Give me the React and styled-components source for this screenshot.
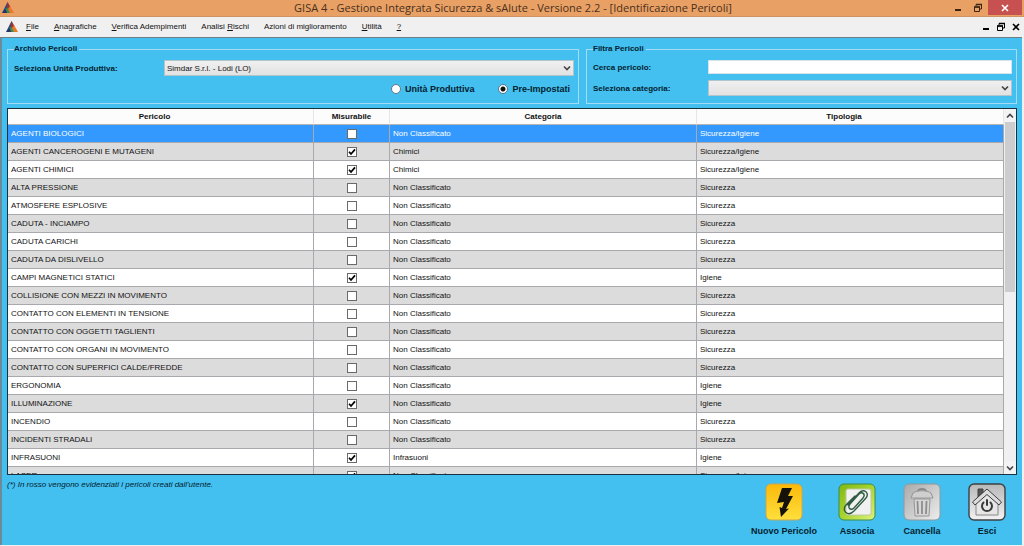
import React, { useState } from "react";
import styled, { createGlobalStyle } from "styled-components";

const MENU = [
  { key: "F", before: "", after: "ile" },
  { key: "A", before: "", after: "nagrafiche" },
  { key: "V", before: "", after: "erifica Adempimenti" },
  { key: "R", before: "Analisi ", after: "ischi" },
  { key: "", before: "Azioni di miglioramento", after: "" },
  { key: "U", before: "", after: "tilità" },
  { key: "?", before: "", after: "" },
];

const NC = "Non Classificato";
const PERICOLI = [
  ["AGENTI BIOLOGICI", false, NC, "Sicurezza/Igiene"],
  ["AGENTI CANCEROGENI E MUTAGENI", true, "Chimici", "Sicurezza/Igiene"],
  ["AGENTI CHIMICI", true, "Chimici", "Sicurezza/Igiene"],
  ["ALTA PRESSIONE", false, NC, "Sicurezza"],
  ["ATMOSFERE ESPLOSIVE", false, NC, "Sicurezza"],
  ["CADUTA - INCIAMPO", false, NC, "Sicurezza"],
  ["CADUTA CARICHI", false, NC, "Sicurezza"],
  ["CADUTA DA DISLIVELLO", false, NC, "Sicurezza"],
  ["CAMPI MAGNETICI STATICI", true, NC, "Igiene"],
  ["COLLISIONE CON MEZZI IN MOVIMENTO", false, NC, "Sicurezza"],
  ["CONTATTO CON ELEMENTI IN TENSIONE", false, NC, "Sicurezza"],
  ["CONTATTO CON OGGETTI TAGLIENTI", false, NC, "Sicurezza"],
  ["CONTATTO CON ORGANI IN MOVIMENTO", false, NC, "Sicurezza"],
  ["CONTATTO CON SUPERFICI CALDE/FREDDE", false, NC, "Sicurezza"],
  ["ERGONOMIA", false, NC, "Igiene"],
  ["ILLUMINAZIONE", true, NC, "Igiene"],
  ["INCENDIO", false, NC, "Sicurezza"],
  ["INCIDENTI STRADALI", false, NC, "Sicurezza"],
  ["INFRASUONI", true, "Infrasuoni", "Igiene"],
  ["LASER", true, NC, "Sicurezza/Igiene"],
];

const Logo = () => (
  <svg width="12" height="12" viewBox="0 0 12 12" aria-hidden="true">
    <path d="M5.5 0 L7 4 L5 8 L0 11 Z" fill="#1d4f86" />
    <path d="M5.5 0 L8.5 5 L7 8 L4.5 7 Z" fill="#a5302c" />
    <path d="M8 4 L12 11 L7.5 11 L6 7 Z" fill="#e8792c" />
    <path d="M3 7 L5.5 6 L8 11 L4 11 Z" fill="#3f8a4a" />
    <path d="M0 11 L3.5 7 L5 11 Z" fill="#27306b" />
  </svg>
);

const Chevron = ({ up }) => (
  <svg width="8" height="6" viewBox="0 0 8 6" aria-hidden="true">
    <path
      d={up ? "M1 4.5 L4 1.5 L7 4.5" : "M1 1.5 L4 4.5 L7 1.5"}
      fill="none"
      stroke="#444"
      strokeWidth="1.6"
    />
  </svg>
);

const MinimizeIcon = () => (
  <svg width="10" height="10" viewBox="0 0 10 10" aria-hidden="true">
    <path d="M2 7 H8" stroke="currentColor" strokeWidth="2" />
  </svg>
);

const RestoreIcon = () => (
  <svg width="10" height="10" viewBox="0 0 10 10" aria-hidden="true">
    <path d="M3 3 V1.5 H8.5 V6 H7" fill="none" stroke="currentColor" />
    <path d="M3 1.5 H9" stroke="currentColor" strokeWidth="1.5" />
    <path d="M1.5 4 H6.5 V8.5 H1.5 Z" fill="none" stroke="currentColor" />
    <path d="M1 4 H7" stroke="currentColor" strokeWidth="1.5" />
  </svg>
);

const CloseIcon = () => (
  <svg width="10" height="10" viewBox="0 0 10 10" aria-hidden="true">
    <path d="M2 2 L8 8 M8 2 L2 8" stroke="currentColor" strokeWidth="1.6" />
  </svg>
);

const BoltIcon = () => (
  <svg width="38" height="38" viewBox="0 0 38 38" aria-hidden="true">
    <defs>
      <linearGradient id="bolt" x1="0" y1="0" x2="0" y2="1">
        <stop offset="0" stopColor="#fbb90a" />
        <stop offset="1" stopColor="#ffdf3c" />
      </linearGradient>
    </defs>
    <rect x="1" y="1" width="36" height="36" rx="5" fill="url(#bolt)" stroke="#c9a550" />
    <path d="M17 5 L27 5 L23 13 L28 13 L21 26 L24 25.5 L16 34 L14.5 24 L17 25 L19 19 L12 20 Z" fill="#15120a" />
  </svg>
);

const ClipIcon = () => (
  <svg width="38" height="38" viewBox="0 0 38 38" aria-hidden="true">
    <defs>
      <linearGradient id="clip" x1="0" y1="0" x2="1" y2="1">
        <stop offset="0" stopColor="#7fb814" />
        <stop offset="0.5" stopColor="#a8d430" />
        <stop offset="1" stopColor="#e0f27c" />
      </linearGradient>
    </defs>
    <rect x="1" y="1" width="36" height="36" rx="5" fill="url(#clip)" stroke="#3c8a4c" />
    <rect x="8" y="6" width="25" height="26" rx="2" fill="#f1f1f1" stroke="#bcc8a0" />
    <path
      d="M10 22 L21 10 C26 5 32 10 28 15 L16 28 C10 34 3 28 8 22 L17 13 M16 25 L25 15 C28 11 24 8 21 11 L12 21 C9 25 13 28 16 25"
      fill="none"
      stroke="#2f5c40"
      strokeWidth="1.4"
      strokeLinecap="round"
    />
  </svg>
);

const TrashIcon = () => (
  <svg width="38" height="38" viewBox="0 0 38 38" aria-hidden="true">
    <defs>
      <linearGradient id="trash" x1="0" y1="0" x2="1" y2="1">
        <stop offset="0" stopColor="#a9a9a9" />
        <stop offset="1" stopColor="#eeeeee" />
      </linearGradient>
    </defs>
    <rect x="1" y="1" width="36" height="36" rx="5" fill="url(#trash)" stroke="#92989b" />
    <path d="M15 9 C15 5 23 5 23 9" fill="none" stroke="#8a8a8a" strokeWidth="2" />
    <path d="M10 10 C14 7 24 7 28 10 L30 15 H8 Z" fill="#cfcfcf" stroke="#969696" />
    <path d="M11 16 H27 L26 33 H12 Z" fill="#d6d6d6" stroke="#969696" />
    <path d="M14.5 18 L15 31 M19 18 V31 M23.5 18 L23 31" stroke="#8d8d8d" strokeWidth="1.8" />
  </svg>
);

const HomeIcon = () => (
  <svg width="38" height="38" viewBox="0 0 38 38" aria-hidden="true">
    <defs>
      <linearGradient id="home" x1="0" y1="0" x2="0" y2="1">
        <stop offset="0" stopColor="#b8b8b8" />
        <stop offset="1" stopColor="#f2f2f2" />
      </linearGradient>
    </defs>
    <rect x="1" y="1" width="36" height="36" rx="5" fill="url(#home)" stroke="#3c4144" strokeWidth="1.4" />
    <path d="M10 6 H15 V12 L10 16 Z" fill="#555" stroke="#444" />
    <path d="M8 19 L19 10 L30 19 V32 H8 Z" fill="#e6e6e6" stroke="#888" />
    <path d="M4.5 19 L19 6 L33.5 19 L31 22 L19 11.5 L7 22 Z" fill="#dcdcdc" stroke="#3d3d3d" />
    <path d="M15.5 19.5 A5 5 0 1 0 22.5 19.5" fill="none" stroke="#3a3a3a" strokeWidth="2" strokeLinecap="round" />
    <path d="M19 17 V22" stroke="#3a3a3a" strokeWidth="2" strokeLinecap="round" />
  </svg>
);

const ACTIONS = [
  { label: "Nuovo Pericolo", Icon: BoltIcon },
  { label: "Associa", Icon: ClipIcon },
  { label: "Cancella", Icon: TrashIcon },
  { label: "Esci", Icon: HomeIcon },
];

const App = () => {
  const [rows, setRows] = useState(PERICOLI);
  const [selected, setSelected] = useState(0);
  const [source, setSource] = useState("preset");
  const [search, setSearch] = useState("");

  const toggle = (index) => {
    setRows(rows.map((r, i) => (i === index ? [r[0], !r[1], r[2], r[3]] : r)));
  };

  return (
    <Window>
      <GlobalStyle />
      <TitleBar>
        <Logo />
        <Title>GISA 4 - Gestione Integrata Sicurezza &amp; sAlute - Versione 2.2 - [Identificazione Pericoli]</Title>
        <WindowButtons>
          <WindowButton aria-label="Riduci a icona"><MinimizeIcon /></WindowButton>
          <WindowButton aria-label="Ripristina"><RestoreIcon /></WindowButton>
          <WindowButton $close aria-label="Chiudi"><CloseIcon /></WindowButton>
        </WindowButtons>
      </TitleBar>

      <MenuBar>
        <Logo />
        <MenuItems>
          {MENU.map((m) => (
            <MenuItem key={m.before + m.key}>
              {m.before}
              {m.key && <u>{m.key}</u>}
              {m.after}
            </MenuItem>
          ))}
        </MenuItems>
        <ChildButtons>
          <ChildButton aria-label="Riduci finestra"><MinimizeIcon /></ChildButton>
          <ChildButton aria-label="Ripristina finestra"><RestoreIcon /></ChildButton>
          <ChildButton aria-label="Chiudi finestra"><CloseIcon /></ChildButton>
        </ChildButtons>
      </MenuBar>

      <Body>
        <Filters>
          <Group>
            <Legend>Archivio Pericoli</Legend>
            <Field $label="150px">
              <label htmlFor="unita">Seleziona Unità Produttiva:</label>
              <SelectBox>
                <Select id="unita">
                  <option>Simdar S.r.l. - Lodi (LO)</option>
                </Select>
                <Chevron />
              </SelectBox>
            </Field>
            <Radios>
              <RadioLabel>
                <Radio name="fonte" checked={source === "unit"} onChange={() => setSource("unit")} />
                Unità Produttiva
              </RadioLabel>
              <RadioLabel>
                <Radio name="fonte" checked={source === "preset"} onChange={() => setSource("preset")} />
                Pre-Impostati
              </RadioLabel>
            </Radios>
          </Group>
          <Group>
            <Legend>Filtra Pericoli</Legend>
            <Field $label="115px">
              <label htmlFor="cerca">Cerca pericolo:</label>
              <TextInput id="cerca" value={search} onChange={(e) => setSearch(e.target.value)} />
            </Field>
            <Field $label="115px">
              <label htmlFor="categoria">Seleziona categoria:</label>
              <SelectBox>
                <Select id="categoria">
                  <option></option>
                </Select>
                <Chevron />
              </SelectBox>
            </Field>
          </Group>
        </Filters>

        <TablePanel>
          <TableView>
            <Table>
              <colgroup>
                <Col $w="306px" />
                <Col $w="76px" />
                <Col $w="307px" />
                <Col />
              </colgroup>
              <thead>
                <tr>
                  <Th $sortable>Pericolo</Th>
                  <Th>Misurabile</Th>
                  <Th>Categoria</Th>
                  <Th $sortable>Tipologia</Th>
                </tr>
              </thead>
              <tbody>
                {rows.map(([name, measurable, category, type], i) => (
                  <Row key={name} $selected={i === selected} onClick={() => setSelected(i)}>
                    <Td>{name}</Td>
                    <Td $center>
                      <Check
                        aria-label={"Misurabile: " + name}
                        checked={measurable}
                        onChange={() => toggle(i)}
                      />
                    </Td>
                    <Td>{category}</Td>
                    <Td>{type}</Td>
                  </Row>
                ))}
              </tbody>
            </Table>
          </TableView>
          <ScrollBar>
            <ScrollButton aria-label="Scorri su"><Chevron up /></ScrollButton>
            <Track><Thumb /></Track>
            <ScrollButton aria-label="Scorri giù"><Chevron /></ScrollButton>
          </ScrollBar>
        </TablePanel>

        <Footer>
          <Note>(*) In rosso vengono evidenziati i pericoli creati dall'utente.</Note>
          <Actions>
            {ACTIONS.map(({ label, Icon }) => (
              <Action key={label}>
                <Icon />
                {label}
              </Action>
            ))}
          </Actions>
        </Footer>
      </Body>
    </Window>
  );
};

const GlobalStyle = createGlobalStyle`
  * {
    box-sizing: border-box;
  }
  body {
    margin: 0;
    font-family: "Liberation Sans", Arial, sans-serif;
    font-size: 8px;
    color: #111;
  }
  button, input, select {
    font: inherit;
    color: inherit;
    margin: 0;
    padding: 0;
  }
  svg {
    display: block;
  }
`;

const Window = styled.div`
  display: flex;
  flex-direction: column;
  height: 100vh;
  background: #f0f0f0;
`;

const TitleBar = styled.header`
  display: grid;
  grid-template-columns: 88px 1fr 88px;
  align-items: center;
  height: 17px;
  padding-left: 2px;
  background: #e8a064;
  border-bottom: 1px solid #cf9463;
`;

const Title = styled.h1`
  margin: 0;
  text-align: center;
  font-family: "Open Sans", "Noto Sans", sans-serif;
  font-size: 11px;
  line-height: 16px;
  font-weight: 400;
  color: #4a3020;
  white-space: nowrap;
`;

const WindowButtons = styled.div`
  display: flex;
  align-self: start;
  justify-content: flex-end;
  padding-right: 2px;
`;

const WindowButton = styled.button`
  display: flex;
  align-items: center;
  justify-content: center;
  width: ${(p) => (p.$close ? "34px" : "20px")};
  height: 15px;
  border: 0;
  background: ${(p) => (p.$close ? "#c75050" : "transparent")};
  color: ${(p) => (p.$close ? "#fff" : "#3a2412")};
`;

const MenuBar = styled.nav`
  display: flex;
  align-items: center;
  height: 20px;
  padding: 0 3px 0 6px;
  background: #f0f0f0;
`;

const MenuItems = styled.div`
  display: flex;
  flex: 1;
  gap: 15px;
  padding-left: 8px;
`;

const MenuItem = styled.button`
  border: 0;
  background: none;
  line-height: 12px;
  white-space: nowrap;
`;

const ChildButtons = styled.div`
  display: flex;
  gap: 5px;
`;

const ChildButton = styled.button`
  display: flex;
  border: 0;
  background: none;
  color: #000;
`;

const Body = styled.main`
  display: flex;
  flex-direction: column;
  flex: 1;
  min-height: 0;
  margin: 0 2px 1px 0;
  padding: 6px 5px 0;
  background: #43bff0;
  border-top: 1px solid #6c7f88;
  border-left: 2px solid #6d8a98;
`;

const Filters = styled.div`
  display: grid;
  grid-template-columns: 572fr 431fr;
  gap: 7px;
`;

const Group = styled.fieldset`
  display: flex;
  flex-direction: column;
  gap: 6px;
  min-width: 0;
  height: 60px;
  margin: 0;
  padding: 6px 4px 0 6px;
  border: 1px solid #a5dcf5;
  font-weight: 700;
  color: #04222f;
`;

const Legend = styled.legend`
  padding: 0 2px 0 0;
  line-height: 10px;
`;

const Field = styled.div`
  display: grid;
  grid-template-columns: ${(p) => p.$label} 1fr;
  align-items: center;
`;

const SelectBox = styled.div`
  display: grid;
  grid-template-columns: 1fr 10px;
  align-items: center;
  height: 16px;
  background: linear-gradient(#f0f0f0, #e2e2e2);
  border: 1px solid #b4c4cc;

  svg {
    grid-area: 1 / 2;
    pointer-events: none;
  }
`;

const Select = styled.select`
  grid-area: 1 / 1 / 2 / 3;
  appearance: none;
  height: 14px;
  padding-left: 2px;
  border: 0;
  background: none;
  font-weight: 400;
  color: #111;
`;

const TextInput = styled.input`
  height: 14px;
  padding: 0 2px;
  border: 1px solid #d5e4ec;
  background: #fff;
  font-weight: 400;
`;

const Radios = styled.div`
  display: flex;
  justify-content: flex-end;
  gap: 24px;
  padding: 1px 4px 0 0;
`;

const RadioLabel = styled.label`
  display: flex;
  align-items: center;
  gap: 4px;
  font-size: 9px;
  line-height: 12px;
`;

const Radio = styled.input.attrs({ type: "radio" })`
  appearance: none;
  width: 10px;
  height: 10px;
  border: 1px solid #5d7a88;
  border-radius: 50%;
  background: #fff;

  &:checked {
    background: radial-gradient(circle, #111 0 2px, #fff 3px);
  }
`;

const TablePanel = styled.section`
  display: grid;
  grid-template-columns: 1fr 12px;
  flex: 1;
  min-height: 0;
  margin-top: 4px;
  border: 1px solid #17323f;
  background: #fff;
`;

const TableView = styled.div`
  overflow: hidden;
`;

const Table = styled.table`
  width: 100%;
  table-layout: fixed;
  border-collapse: separate;
  border-spacing: 0;
`;

const Col = styled.col`
  width: ${(p) => p.$w || "auto"};
`;

const Th = styled.th`
  height: 16px;
  padding: 0 ${(p) => (p.$sortable ? "12px" : "0")} 0 0;
  border-right: 1px solid #e6e6e6;
  border-bottom: 1px solid #b5b5b5;
  background: #fcfcfc;
  line-height: 10px;
`;

const Row = styled.tr`
  background: ${(p) => (p.$selected ? "#3399ff" : "#fff")};
  color: ${(p) => (p.$selected ? "#fff" : "#111")};

  &:nth-child(even) {
    background: ${(p) => (p.$selected ? "#3399ff" : "#dcdcdc")};
  }
`;

const Td = styled.td`
  height: 18px;
  padding: 1px 2px 0 3px;
  border-right: 1px solid #a9a9ad;
  border-bottom: 1px solid #a9a9ad;
  line-height: 10px;
  white-space: nowrap;
  text-align: ${(p) => (p.$center ? "center" : "left")};
`;

const Check = styled.input.attrs({ type: "checkbox" })`
  appearance: none;
  display: block;
  width: 10px;
  height: 10px;
  margin: 0 auto;
  border: 1px solid #6a6a6a;
  background: #fff;

  &:checked {
    background: #fff
      url("data:image/svg+xml,%3Csvg xmlns='http://www.w3.org/2000/svg' viewBox='0 0 8 8'%3E%3Cpath d='M1 3.8 L3 6 L7 1.4' fill='none' stroke='%23000' stroke-width='1.7'/%3E%3C/svg%3E")
      center / 8px 8px no-repeat;
  }
`;

const ScrollBar = styled.div`
  display: flex;
  flex-direction: column;
  background: #f0f0f0;
`;

const ScrollButton = styled.button`
  display: flex;
  align-items: center;
  justify-content: center;
  height: 13px;
  border: 0;
  background: #f3f3f3;
`;

const Track = styled.div`
  flex: 1;
`;

const Thumb = styled.div`
  height: 50%;
  margin: 0 1px;
  background: #cdcdcd;
`;

const Footer = styled.footer`
  display: flex;
  justify-content: space-between;
  height: 70px;
`;

const Note = styled.p`
  margin: 5px 0 0;
  line-height: 10px;
  font-style: italic;
  color: #04222f;
`;

const Actions = styled.div`
  display: grid;
  grid-template-columns: 86px 60px 70px 60px;
  align-items: start;
  padding-top: 8px;
`;

const Action = styled.button`
  display: flex;
  flex-direction: column;
  align-items: center;
  gap: 5px;
  border: 0;
  background: none;
  font-size: 9px;
  line-height: 10px;
  font-weight: 700;
  color: #04222f;
  white-space: nowrap;
`;

export default App;
